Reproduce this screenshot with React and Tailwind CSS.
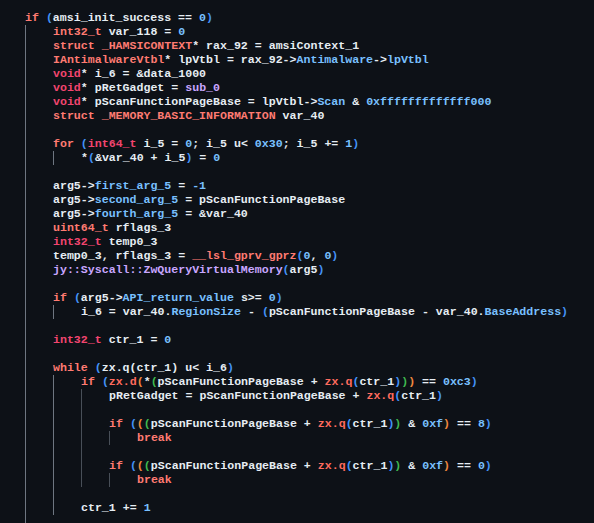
import React from "react";

// token colour classes
const C = {
  w: "text-[#e6edf3]",
  k: "text-[#ff7b72]",
  p: "text-[#f2456f]",
  n: "text-[#79c0ff]",
  b: "text-[#4493f8]",
  o: "text-[#f0883e]",
  g: "text-[#3fb950]",
  v: "text-[#c8a6ff]",
  r: "text-[#ff6b5e]",
};

const GUIDE = ["border-[#6e7681]", "border-[#6e7681]", "border-[#484f58]", "border-[#484f58]"];

const maskIf = (n) => [
  ["k", "if"], ["w", " "], ["b", "("], ["o", "("], ["g", "("],
  ["w", "pScanFunctionPageBase + "], ["r", "zx.q"], ["b", "("], ["w", "ctr_1"], ["b", ")"],
  ["g", ")"], ["w", " & "], ["n", "0xf"], ["o", ")"], ["w", " == "], ["n", n], ["b", ")"],
];

// [indent, guides, tokens]
const lines = [
  [0, 0, [["k", "if"], ["w", " "], ["b", "("], ["w", "amsi_init_success == "], ["n", "0"], ["b", ")"]]],
  [1, 1, [["k", "int32_t"], ["w", " var_118 = "], ["n", "0"]]],
  [1, 1, [["k", "struct _HAMSICONTEXT"], ["w", "* rax_92 = amsiContext_1"]]],
  [1, 1, [["k", "IAntimalwareVtbl"], ["w", "* lpVtbl = rax_92->"], ["n", "Antimalware"], ["w", "->"], ["n", "lpVtbl"]]],
  [1, 1, [["p", "void"], ["w", "* i_6 = &data_1000"]]],
  [1, 1, [["p", "void"], ["w", "* pRetGadget = "], ["v", "sub_0"]]],
  [1, 1, [["p", "void"], ["w", "* pScanFunctionPageBase = lpVtbl->"], ["n", "Scan"], ["w", " & "], ["n", "0xfffffffffffff000"]]],
  [1, 1, [["k", "struct _MEMORY_BASIC_INFORMATION"], ["w", " var_40"]]],
  [0, 1, []],
  [1, 1, [["k", "for"], ["w", " "], ["b", "("], ["p", "int64_t"], ["w", " i_5 = "], ["n", "0"], ["w", "; i_5 u< "], ["n", "0x30"], ["w", "; i_5 += "], ["n", "1"], ["b", ")"]]],
  [2, 2, [["w", "*"], ["b", "("], ["w", "&var_40 + i_5"], ["b", ")"], ["w", " = "], ["n", "0"]]],
  [0, 1, []],
  [1, 1, [["w", "arg5->"], ["n", "first_arg_5"], ["w", " = "], ["n", "-1"]]],
  [1, 1, [["w", "arg5->"], ["n", "second_arg_5"], ["w", " = pScanFunctionPageBase"]]],
  [1, 1, [["w", "arg5->"], ["n", "fourth_arg_5"], ["w", " = &var_40"]]],
  [1, 1, [["k", "uint64_t"], ["w", " rflags_3"]]],
  [1, 1, [["p", "int32_t"], ["w", " temp0_3"]]],
  [1, 1, [["w", "temp0_3, rflags_3 = "], ["k", "__lsl_gprv_gprz"], ["b", "("], ["n", "0"], ["w", ", "], ["n", "0"], ["b", ")"]]],
  [1, 1, [["v", "jy::Syscall::ZwQueryVirtualMemory"], ["b", "("], ["w", "arg5"], ["b", ")"]]],
  [0, 1, []],
  [1, 1, [["k", "if"], ["w", " "], ["b", "("], ["w", "arg5->"], ["n", "API_return_value"], ["w", " s>= "], ["n", "0"], ["b", ")"]]],
  [2, 2, [["w", "i_6 = var_40."], ["n", "RegionSize"], ["w", " - "], ["b", "("], ["w", "pScanFunctionPageBase - var_40."], ["n", "BaseAddress"], ["b", ")"]]],
  [0, 1, []],
  [1, 1, [["p", "int32_t"], ["w", " ctr_1 = "], ["n", "0"]]],
  [0, 1, []],
  [1, 1, [["k", "while"], ["w", " "], ["b", "("], ["w", "zx.q(ctr_1) u< i_6"], ["b", ")"]]],
  [2, 2, [
    ["k", "if"], ["w", " "], ["b", "("], ["r", "zx.d"], ["o", "("], ["w", "*"], ["g", "("],
    ["w", "pScanFunctionPageBase + "], ["r", "zx.q"], ["b", "("], ["w", "ctr_1"], ["b", ")"],
    ["g", ")"], ["o", ")"], ["w", " == "], ["n", "0xc3"], ["b", ")"],
  ]],
  [3, 3, [["w", "pRetGadget = pScanFunctionPageBase + "], ["r", "zx.q"], ["b", "("], ["w", "ctr_1"], ["b", ")"]]],
  [0, 3, []],
  [3, 3, maskIf("8")],
  [4, 4, [["k", "break"]]],
  [0, 3, []],
  [3, 3, maskIf("0")],
  [4, 4, [["k", "break"]]],
  [0, 2, []],
  [2, 2, [["w", "ctr_1 += "], ["n", "1"]]],
  [0, 1, []],
  [0, 1, []],
];

const CodeLine = ({ indent, guides, tokens }) => {
  const units = Math.max(indent, guides);
  return (
    <div className="flex h-[14px] leading-[14px] whitespace-pre">
      {Array.from({ length: units }, (_, i) => (
        <span
          key={i}
          className={`w-[28px] shrink-0 h-full ${i < guides ? `border-l ${GUIDE[i]}` : ""}`}
        />
      ))}
      <span>
        {tokens.map(([c, t], i) => (
          <span key={i} className={C[c]}>{t}</span>
        ))}
      </span>
    </div>
  );
};

export default function App() {
  return (
    <div className="w-[594px] h-[523px] overflow-hidden bg-[#0d1117] pt-[11px] pl-[25px] font-['Liberation_Mono',monospace] font-bold text-[11.6px] text-[#e6edf3]">
      {lines.map(([indent, guides, tokens], i) => (
        <CodeLine key={i} indent={indent} guides={guides} tokens={tokens} />
      ))}
    </div>
  );
}
